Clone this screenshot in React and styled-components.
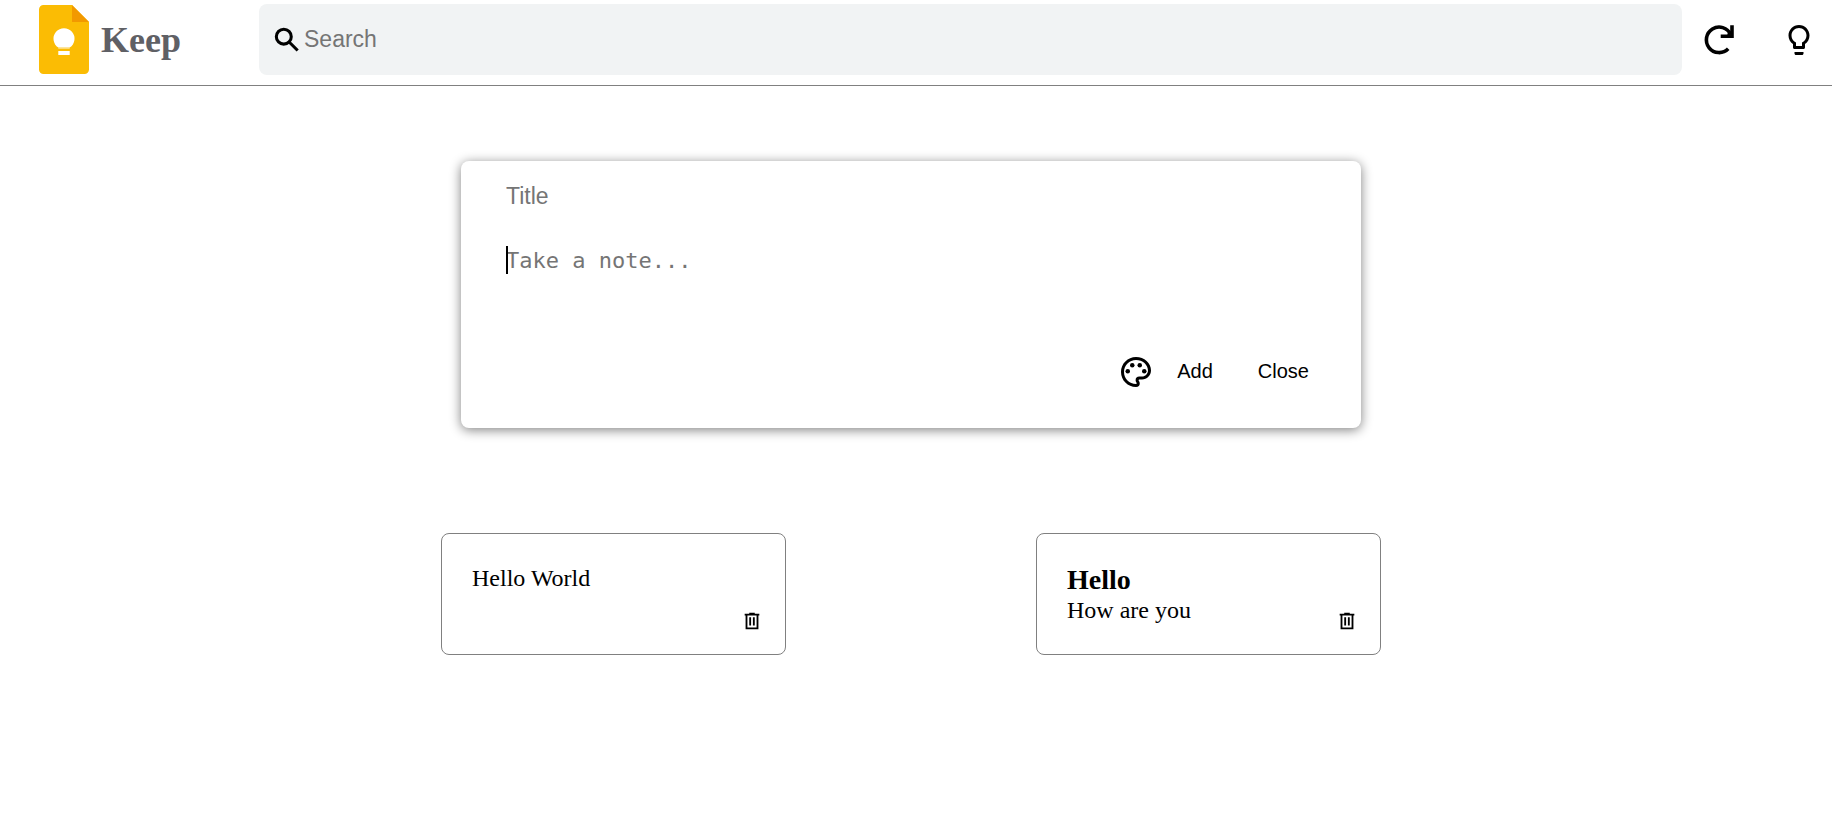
import React, { useState } from "react";
import styled, { createGlobalStyle } from "styled-components";
import { MdOutlineLightbulb, MdOutlinePalette } from "react-icons/md";

const GlobalStyle = createGlobalStyle`
  * { box-sizing: border-box; }
  body {
    margin: 0;
    background: #fff;
    color: #000;
    font-family: "Liberation Serif", "Times New Roman", serif;
  }
`;

const sans = `"Liberation Sans", Arial, sans-serif`;
const mono = `"DejaVu Sans Mono", Consolas, monospace`;

const Header = styled.header`
  display: flex;
  align-items: center;
  padding: 4px 15px 10px 39px;
  border-bottom: 1px solid #808080;
`;

const Brand = styled.a`
  flex: none;
  display: flex;
  align-items: center;
  gap: 12px;
  width: 220px;
  color: #5f6065;
  font-size: 36px;
  line-height: 42px;
  font-weight: bold;
  text-decoration: none;

  svg { display: block; }
`;

const SearchBar = styled.label`
  flex: 1;
  min-width: 0;
  display: flex;
  align-items: center;
  gap: 1px;
  height: 71px;
  padding: 0 12px;
  border-radius: 8px;
  background: #f1f3f4;

  svg { flex: none; }
`;

const Field = styled.input`
  display: block;
  width: 100%;
  height: 30px;
  padding: 0;
  border: 0;
  outline: 0;
  background: transparent;
  font-family: ${sans};
  font-size: 23px;

  &::placeholder { color: #757575; opacity: 1; }
`;

const HeaderActions = styled.nav`
  flex: none;
  display: flex;
  gap: 44px;
  margin-left: 19px;
`;

const IconButton = styled.button`
  flex: none;
  display: block;
  padding: 0;
  border: 0;
  background: transparent;
  color: #000;
  cursor: pointer;

  svg { display: block; }
`;

const Main = styled.main`
  display: flex;
  flex-direction: column;
  align-items: center;
  gap: 105px;
  padding: 75px 10px 40px 0;
`;

const Composer = styled.form`
  width: 100%;
  max-width: 900px;
  padding: 20px 52px 38px 45px;
  border-radius: 8px;
  background: #fff;
  box-shadow: 0 2px 12px #808080;
`;

const NoteField = styled.div`
  position: relative;
  margin: 35px 0 24px;
`;

const NoteInput = styled.textarea`
  display: block;
  width: 100%;
  height: 84px;
  padding: 0;
  border: 0;
  outline: 0;
  resize: none;
  background: transparent;
  caret-color: transparent;
  font-family: ${mono};
  font-size: 22px;
  line-height: 30px;

  &::placeholder { color: #757575; opacity: 1; }
`;

const Caret = styled.span`
  position: absolute;
  top: 0;
  left: 0;
  width: 2px;
  height: 28px;
  background: #000;
`;

const ComposerActions = styled.div`
  display: flex;
  align-items: center;
  justify-content: flex-end;
`;

const TextButton = styled.button`
  padding: 0 0 2px;
  margin-left: ${({ $gap }) => $gap}px;
  border: 0;
  background: transparent;
  color: #000;
  font-family: ${sans};
  font-size: 20px;
  line-height: 24px;
  cursor: pointer;
`;

const Notes = styled.section`
  display: flex;
  flex-wrap: wrap;
  justify-content: space-between;
  gap: 40px;
  width: 100%;
  max-width: 940px;
`;

const NoteCard = styled.article`
  display: flex;
  justify-content: space-between;
  align-items: flex-start;
  width: 345px;
  min-height: 122px;
  padding: 30px 22px 22px 30px;
  border: 1px solid #808080;
  border-radius: 8px;
`;

const NoteTitle = styled.h2`
  margin: 0;
  font-size: 28px;
  line-height: 32px;
`;

const NoteText = styled.p`
  margin: 0;
  font-size: 24px;
  line-height: 28px;
`;

const DeleteButton = styled(IconButton)`
  align-self: flex-end;
`;

const KeepLogo = () => (
  <svg width="50" height="69" viewBox="0 0 50 69" aria-hidden="true">
    <path fill="#fbbc04" d="M4.5 0H33l17 17v47.5a4.5 4.5 0 0 1-4.5 4.5h-41A4.5 4.5 0 0 1 0 64.5V4.5A4.5 4.5 0 0 1 4.5 0z" />
    <path fill="#f29900" d="M33 0l17 17H33z" />
    <path fill="#fff" d="M19.3 42.5a10.5 10.5 0 1 1 11.4 0zM19.3 46h11.4v4H19.3z" />
    <path fill="#fff" fillOpacity=".45" d="M19.3 42.5h11.4V44H19.3z" />
  </svg>
);

const SearchIcon = () => (
  <svg width="32" height="32" viewBox="0 0 24 24" fill="none" stroke="currentColor" strokeWidth="2.3" aria-hidden="true">
    <circle cx="9.6" cy="9.5" r="5.6" />
    <path d="M13.6 13.5l6.4 6.4" />
  </svg>
);

const RefreshIcon = () => (
  <svg width="36" height="36" viewBox="0 0 36 36" fill="none" stroke="currentColor" strokeWidth="3.6" aria-hidden="true">
    <path d="M27.2 26.8A12.75 12.75 0 1 1 29.7 12.5" />
    <path d="M31 3.3V14.3H19.7" />
    <path d="M27 9.5l4 4.8h-5z" fill="currentColor" stroke="none" />
  </svg>
);

const TrashIcon = () => (
  <svg width="22" height="22" viewBox="0 -960 960 960" fill="currentColor" aria-hidden="true">
    <path d="M200-120v-600h-40v-80h200v-40h240v40h200v80h-40v600H200Zm480-600H280v520h400v-520ZM360-280h80v-360h-80v360Zm160 0h80v-360h-80v360Z" />
  </svg>
);

const initialNotes = [
  { id: 1, title: "", text: "Hello World" },
  { id: 2, title: "Hello", text: "How are you" },
];

export default function App() {
  const [notes, setNotes] = useState(initialNotes);
  const [title, setTitle] = useState("");
  const [text, setText] = useState("");

  const clear = () => {
    setTitle("");
    setText("");
  };

  const addNote = (event) => {
    event.preventDefault();
    if (!title && !text) return;
    setNotes([...notes, { id: Date.now(), title, text }]);
    clear();
  };

  return (
    <>
      <GlobalStyle />
      <Header>
        <Brand href="#">
          <KeepLogo />
          Keep
        </Brand>
        <SearchBar>
          <SearchIcon />
          <Field type="text" placeholder="Search" aria-label="Search" />
        </SearchBar>
        <HeaderActions>
          <IconButton type="button" aria-label="Refresh"><RefreshIcon /></IconButton>
          <IconButton type="button" aria-label="Ideas"><MdOutlineLightbulb size={36} /></IconButton>
        </HeaderActions>
      </Header>
      <Main>
        <Composer onSubmit={addNote}>
          <Field type="text" placeholder="Title" aria-label="Title" value={title} onChange={(e) => setTitle(e.target.value)} />
          <NoteField>
            <NoteInput placeholder="Take a note..." aria-label="Note" value={text} onChange={(e) => setText(e.target.value)} />
            {!text && <Caret />}
          </NoteField>
          <ComposerActions>
            <IconButton type="button" aria-label="Colour"><MdOutlinePalette size={36} /></IconButton>
            <TextButton type="submit" $gap={23}>Add</TextButton>
            <TextButton type="button" $gap={45} onClick={clear}>Close</TextButton>
          </ComposerActions>
        </Composer>
        <Notes>
          {notes.map((note) => (
            <NoteCard key={note.id}>
              <div>
                {note.title && <NoteTitle>{note.title}</NoteTitle>}
                <NoteText>{note.text}</NoteText>
              </div>
              <DeleteButton type="button" aria-label="Delete note" onClick={() => setNotes(notes.filter((n) => n.id !== note.id))}>
                <TrashIcon />
              </DeleteButton>
            </NoteCard>
          ))}
        </Notes>
      </Main>
    </>
  );
}
